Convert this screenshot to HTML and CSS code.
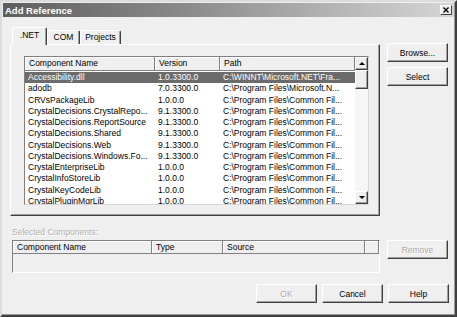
FILE: index.html
```html
<!DOCTYPE html>
<html lang="en">
<head>
    <meta charset="UTF-8">
    <title>Add Reference</title>
    <link rel="stylesheet" href="styles.css">
</head>
<body>
<div class="window">
    <div class="titlebar">
        <span class="title">Add Reference</span>
        <span class="close">
            <svg width="6" height="6" viewBox="0 0 6 6"><path d="M0.5 0.5 L5.5 5.5 M5.5 0.5 L0.5 5.5" stroke="#000" stroke-width="1.4"/></svg>
        </span>
    </div>
    <div class="content">
        <div class="top">
            <div class="tabs">
                <div class="tabstrip">
                    <div class="tab tab-net active">.NET</div>
                    <div class="tab tab-com">COM</div>
                    <div class="tab tab-proj">Projects</div>
                </div>
                <div class="panel">
                    <div class="listview">
                        <div class="lv-main">
                            <div class="lv-header">
                                <div class="hcell">Component Name</div>
                                <div class="hcell">Version</div>
                                <div class="hcell">Path</div>
                            </div>
                            <div class="lv-rows">
                                <div class="row selected"><span>Accessibility.dll</span><span>1.0.3300.0</span><span>C:\WINNT\Microsoft.NET\Fra...</span></div>
                                <div class="row"><span>adodb</span><span>7.0.3300.0</span><span>C:\Program Files\Microsoft.N...</span></div>
                                <div class="row"><span>CRVsPackageLib</span><span>1.0.0.0</span><span>C:\Program Files\Common Fil...</span></div>
                                <div class="row"><span>CrystalDecisions.CrystalRepo...</span><span>9.1.3300.0</span><span>C:\Program Files\Common Fil...</span></div>
                                <div class="row"><span>CrystalDecisions.ReportSource</span><span>9.1.3300.0</span><span>C:\Program Files\Common Fil...</span></div>
                                <div class="row"><span>CrystalDecisions.Shared</span><span>9.1.3300.0</span><span>C:\Program Files\Common Fil...</span></div>
                                <div class="row"><span>CrystalDecisions.Web</span><span>9.1.3300.0</span><span>C:\Program Files\Common Fil...</span></div>
                                <div class="row"><span>CrystalDecisions.Windows.Fo...</span><span>9.1.3300.0</span><span>C:\Program Files\Common Fil...</span></div>
                                <div class="row"><span>CrystalEnterpriseLib</span><span>1.0.0.0</span><span>C:\Program Files\Common Fil...</span></div>
                                <div class="row"><span>CrystalInfoStoreLib</span><span>1.0.0.0</span><span>C:\Program Files\Common Fil...</span></div>
                                <div class="row"><span>CrystalKeyCodeLib</span><span>1.0.0.0</span><span>C:\Program Files\Common Fil...</span></div>
                                <div class="row"><span>CrystalPluginMgrLib</span><span>1.0.0.0</span><span>C:\Program Files\Common Fil...</span></div>
                            </div>
                        </div>
                        <div class="scrollbar">
                            <div class="sb-btn"><span class="arrow-up"></span></div>
                            <div class="sb-thumb"></div>
                            <div class="sb-track"></div>
                            <div class="sb-btn"><span class="arrow-down"></span></div>
                        </div>
                    </div>
                </div>
            </div>
            <div class="side">
                <button class="btn">Browse...</button>
                <button class="btn">Select</button>
            </div>
        </div>

        <div class="selected-label">Selected Components:</div>
        <div class="bottom">
            <div class="selected-list">
                <div class="sel-header">
                    <div class="hcell">Component Name</div>
                    <div class="hcell">Type</div>
                    <div class="hcell">Source</div>
                    <div class="hcell"></div>
                </div>
            </div>
            <button class="btn" disabled>Remove</button>
        </div>

        <div class="footer">
            <button class="btn" disabled>OK</button>
            <button class="btn">Cancel</button>
            <button class="btn">Help</button>
        </div>
    </div>
</div>
</body>
</html>
```

FILE: styles.css
```css
body {
    margin: 0;
    padding: 0;
    background-color: #efefef;
    font-family: "Liberation Sans", Arial, sans-serif;
    font-size: 8.5px;
}
.window {
    width: 457px;
    height: 317px;
    box-sizing: border-box;
    border: 2px solid;
    border-color: #dcdcdc #404040 #404040 #dcdcdc;
    box-shadow: inset -1px -1px 0 #9a9a9a;
    padding: 1px;
    background: #efefef;
}
.titlebar {
    height: 14px;
    display: flex;
    align-items: center;
    justify-content: space-between;
    padding: 0 2px 0 2px;
    background: linear-gradient(to right, #5e5e5e, #8a8a8a 40%, #d6d6d6);
}
.title {
    color: #fff;
    font-weight: bold;
    font-size: 9.5px;
}
.close {
    width: 12px;
    height: 10px;
    box-sizing: border-box;
    display: flex;
    align-items: center;
    justify-content: center;
    background: #ececec;
    border: 1px solid;
    border-color: #fff #404040 #404040 #fff;
}
.content {
    padding: 10px 5px 0 7px;
}
.top {
    display: flex;
    gap: 7px;
}
.tabs {
    width: 370px;
}
.tabstrip {
    height: 17px;
    display: flex;
    align-items: flex-end;
    padding-left: 2px;
}
.tab {
    box-sizing: border-box;
    height: 14px;
    line-height: 12px;
    text-align: center;
    border-top: 1px solid #fff;
    border-left: 1px solid #fff;
    border-right: 1px solid #404040;
    box-shadow: inset -1px 0 0 #a0a0a0;
    border-radius: 2px 2px 0 0;
    background: #efefef;
}
.tab.active {
    height: 18px;
    line-height: 15px;
    margin-bottom: -1px;
    position: relative;
    z-index: 1;
}
.tab-net { width: 35px; }
.tab-com { width: 33px; }
.tab-proj { width: 41px; }
.panel {
    height: 172px;
    box-sizing: border-box;
    border-top: 1px solid #fff;
    border-left: 1px solid #fff;
    border-right: 1px solid #404040;
    border-bottom: 1px solid #404040;
    box-shadow: inset -1px -1px 0 #a0a0a0;
    padding: 11px 0 0 13px;
}
.listview {
    width: 345px;
    height: 149px;
    box-sizing: border-box;
    border: 1px solid;
    border-color: #808080 #d8d8d8 #d8d8d8 #808080;
    background: #fff;
    display: flex;
}
.lv-main {
    flex: 1;
    overflow: hidden;
}
.lv-header,
.sel-header {
    display: grid;
    height: 14px;
}
.lv-header {
    grid-template-columns: 130px 65px 1fr;
}
.sel-header {
    grid-template-columns: 139px 71px 142px 1fr;
    height: 13px;
}
.hcell {
    box-sizing: border-box;
    background: #efefef;
    border-right: 1px solid #808080;
    border-bottom: 1px solid #808080;
    box-shadow: inset 1px 1px 0 #fff;
    padding-left: 4px;
    line-height: 13px;
    white-space: nowrap;
    overflow: hidden;
}
.sel-header .hcell {
    line-height: 12px;
}
.lv-rows {
    padding-top: 1px;
}
.row {
    display: grid;
    grid-template-columns: 130px 65px 1fr;
    height: 11.27px;
    line-height: 11.27px;
    color: #000;
}
.row span {
    padding-left: 3px;
    white-space: nowrap;
    overflow: hidden;
}
.row.selected {
    background: #6b6b6b;
    color: #fff;
}
.scrollbar {
    width: 13px;
    display: flex;
    flex-direction: column;
    background: #f6f6f6;
}
.sb-btn,
.sb-thumb {
    box-sizing: border-box;
    background: #efefef;
    border: 1px solid;
    border-color: #fff #404040 #404040 #fff;
    box-shadow: inset -1px -1px 0 #a0a0a0;
}
.sb-btn {
    height: 13px;
    display: flex;
    align-items: center;
    justify-content: center;
}
.sb-thumb {
    height: 19px;
}
.sb-track {
    flex: 1;
}
.arrow-up {
    width: 0;
    height: 0;
    border-left: 3px solid transparent;
    border-right: 3px solid transparent;
    border-bottom: 3px solid #000;
}
.arrow-down {
    width: 0;
    height: 0;
    border-left: 3px solid transparent;
    border-right: 3px solid transparent;
    border-top: 3px solid #000;
}
.side {
    display: flex;
    flex-direction: column;
    gap: 5px;
    padding-top: 16px;
}
.btn {
    width: 61px;
    height: 19px;
    box-sizing: border-box;
    padding: 0;
    background: #efefef;
    border: 1px solid;
    border-color: #fff #404040 #404040 #fff;
    box-shadow: inset -1px -1px 0 #a0a0a0;
    font-family: "Liberation Sans", Arial, sans-serif;
    font-size: 8.5px;
    color: #000;
}
.btn:disabled {
    color: #ababab;
    text-shadow: 1px 1px 0 #fff;
}
.selected-label {
    margin-top: 10px;
    height: 12px;
    line-height: 12px;
    padding-left: 2px;
    color: #b0b0b0;
    text-shadow: 1px 1px 0 #fff;
}
.bottom {
    margin-top: 2px;
    padding-left: 2px;
    display: flex;
    gap: 7px;
    align-items: flex-start;
}
.selected-list {
    width: 368px;
    height: 33px;
    box-sizing: border-box;
    border: 1px solid;
    border-color: #808080 #fff #fff #808080;
}
.footer {
    margin-top: 11px;
    display: flex;
    justify-content: flex-end;
    gap: 5px;
}
```
